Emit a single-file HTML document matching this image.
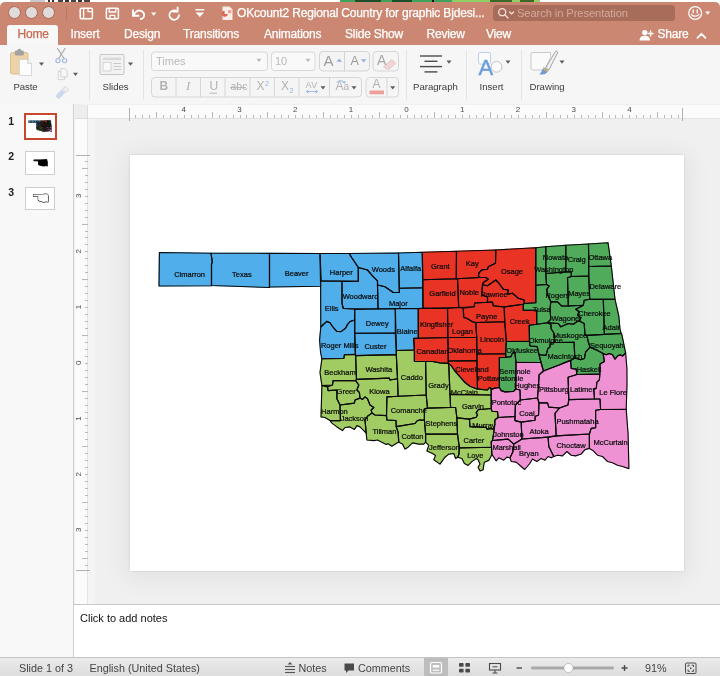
<!DOCTYPE html>
<html><head><meta charset="utf-8">
<style>
*{box-sizing:border-box;margin:0;padding:0}
html,body{width:720px;height:676px;overflow:hidden;background:#fff;font-family:"Liberation Sans",sans-serif;}
#root{position:relative;width:720px;height:676px;overflow:hidden;background:#fff}
.abs{position:absolute}
#bgstrip{left:0;top:0;width:720px;height:6px;background:#fff}
#win{will-change:transform;left:0;top:2px;width:720px;height:674px;background:#f6f6f6;border-radius:5px 5px 0 0;overflow:hidden}
#title{left:0;top:0;width:720px;height:43px;background:#cb8771}
.tl{position:absolute;top:4px;width:13px;height:13px;border-radius:50%;background:#dfdbda;border:1px solid #ad6853}
.tab{position:absolute;top:25px;color:#fff;font-size:12px;line-height:14px;white-space:nowrap;letter-spacing:-0.2px;-webkit-text-stroke:0.25px currentColor}
#hometab{left:7px;top:22.5px;width:51px;height:20.5px;background:#f8f8f8;border-radius:3px 3px 0 0}
#ribbon{left:0;top:43px;width:720px;height:60px;background:#f6f6f6;border-bottom:1px solid #d2d2d2}
.rl{position:absolute;font-size:9.6px;color:#3c3c3c;white-space:nowrap}
.fb{top:34px;font-size:12px;color:#b2b2b2;line-height:14px;white-space:nowrap}
.tn{position:absolute;left:8.3px;font-size:10.5px;font-weight:bold;color:#222;line-height:12px}
.vsep{position:absolute;width:1px;background:#e4e4e4}
#left{left:0;top:102px;width:74px;height:554px;background:#f8f8f8;border-right:1px solid #d0d0d0}
#work{left:74px;top:102px;width:646px;height:500px;background:#f0f0f0}
#band{left:88px;top:117px;width:7px;height:485px;background:#f5f5f5}
#hruler{left:88px;top:103px;width:632px;height:14px;background:#fbfbfb;border-bottom:1px solid #e2e2e2}
#vruler{left:75px;top:117px;width:13px;height:485px;background:#fbfbfb;border-right:1px solid #e4e4e4}
#corner{left:75px;top:103px;width:13px;height:14px;background:#ededed;border-right:1px solid #dcdcdc;border-bottom:1px solid #dcdcdc}
#slide{left:130px;top:153px;width:554px;height:416px;background:#fff;box-shadow:0 3px 24px 4px rgba(0,0,0,.065), 0 0 2px rgba(0,0,0,.14)}
#notes{left:74px;top:602px;width:646px;height:54px;background:#fff;border-top:1px solid #c8c8c8}
#status{left:0;top:655px;width:720px;height:19px;background:linear-gradient(#ebebeb,#dddddd);border-top:1px solid #c4c4c4}
.st{position:absolute;top:3.5px;font-size:10.8px;color:#444;white-space:nowrap}
</style></head><body>
<div id="root">
<div id="bgstrip" class="abs">
  <div class="abs" style="left:30px;top:0;width:15px;height:3px;background:#c9c9c9"></div>
  <div class="abs" style="left:48px;top:0;width:2px;height:3px;background:#333"></div><div class="abs" style="left:52px;top:0;width:2px;height:3px;background:#333"></div><div class="abs" style="left:58px;top:0;width:5px;height:2px;background:#444"></div><div class="abs" style="left:65px;top:0;width:4px;height:3px;background:#333"></div><div class="abs" style="left:71px;top:0;width:5px;height:2px;background:#444"></div><div class="abs" style="left:78px;top:0;width:4px;height:3px;background:#333"></div><div class="abs" style="left:84px;top:0;width:6px;height:2px;background:#444"></div>
  <div class="abs" style="left:340px;top:0;width:112px;height:4px;background:#3fa25a"></div>
  <div class="abs" style="left:452px;top:0;width:88px;height:4px;background:#8fcf63"></div>
  <div class="abs" style="left:355px;top:0;width:26px;height:2px;background:#1d4d2a"></div>
  <div class="abs" style="left:392px;top:0;width:20px;height:2px;background:#1d4d2a"></div>
  <div class="abs" style="left:432px;top:0;width:2px;height:3px;background:#111"></div>
  <div class="abs" style="left:490px;top:0;width:22px;height:2px;background:#3c6a26"></div>
  <div class="abs" style="left:520px;top:0;width:14px;height:2px;background:#3c6a26"></div>
</div>
<div id="win" class="abs">
  <div id="title" class="abs">
    <div class="tl" style="left:8.2px"></div><div class="tl" style="left:24.8px"></div><div class="tl" style="left:41.8px"></div>
    <div class="abs" style="left:66px;top:4px;width:1px;height:15px;background:#b87a68"></div>
    <svg class="abs" style="left:0;top:0" width="720" height="43" viewBox="0 0 720 43" fill="none" stroke="#fff" stroke-width="1.4" stroke-linecap="round" stroke-linejoin="round">
      <!-- sidebar/doc icon -->
      <rect x="80.2" y="6.2" width="12.2" height="10.6" rx="1.2" stroke-width="1.5"/><line x1="83.6" y1="6.4" x2="83.6" y2="16.6" stroke-width="1.3"/><path d="M88 6.5v3.2h4" stroke-width="1.2"/>
      <!-- save icon -->
      <path d="M107.6 6.2h9.6a1.2 1.2 0 0 1 1.2 1.2v8.2a1.2 1.2 0 0 1-1.2 1.2h-9.6a1.2 1.2 0 0 1-1.2-1.2v-8.2a1.2 1.2 0 0 1 1.2-1.2z" stroke-width="1.5"/><path d="M109.2 6.6v3.4h6.6v-3.4" stroke-width="1.3"/><path d="M110 16.6v-3.2h4.8v3.2" stroke-width="1.3"/>
      <!-- undo -->
      <path d="M133 8.2v5.6h5.6" stroke-width="1.9" stroke-linejoin="miter"/><path d="M133.6 13.2c1.6-3.6 4.6-5.4 7.4-4.4 2.8 1 3.8 3.8 2.8 6-0.6 1.2-1.6 2-3 2.2" stroke-width="1.9"/>
      <path d="M151 10.6h5.4l-2.7 3.2z" fill="#fff" stroke="none"/>
      <!-- redo -->
      <path d="M177.6 5.4v4.2h-4.4" stroke-width="1.8" stroke-linejoin="miter"/><path d="M177.2 9.4c-2.6-1.6-5.6-1-7 1.2-1.4 2.2-0.8 5 1.4 6.4 2.2 1.4 5.2 0.8 6.6-1.4 0.5-0.8 0.8-1.6 0.8-2.5" stroke-width="1.8"/>
      <!-- customize -->
      <line x1="196" y1="7.8" x2="203.6" y2="7.8" stroke-width="1.6"/><path d="M195.6 10.6h8.4l-4.2 4.4z" fill="#fff" stroke="none"/>
      <!-- doc icon for title -->
      <path d="M222.5 4.5h7l3 3v10.5h-10z" fill="#fbeeea" stroke="none"/><path d="M224.6 8.8a3 3 0 1 0 3.2 3.2h-3.2z" fill="#d9694c" stroke="none"/><rect x="228" y="8" width="3.4" height="3.2" fill="#e9a896" stroke="none"/>
      <!-- smiley -->
      <circle cx="695.2" cy="11" r="6.4" stroke-width="1.3"/><line x1="693.2" y1="8" x2="693.2" y2="10.8" stroke-width="1.3"/><line x1="697.2" y1="8" x2="697.2" y2="10.8" stroke-width="1.3"/><path d="M691.6 12.4c1 2.4 6 2.4 7.2 0" stroke-width="1.2"/>
      <path d="M705.2 9.5h5l-2.5 3.2z" fill="#fff" stroke="none"/>
      <!-- share person -->
      <circle cx="644.8" cy="30.6" r="2.7" fill="#fff" stroke="none"/><path d="M639.6 38.6c0-3.6 2.2-4.8 5.2-4.8s5.2 1.2 5.2 4.8z" fill="#fff" stroke="none"/><path d="M650.6 29v5M648.2 31.5h4.8" stroke-width="1.4"/>
      <!-- chevron up -->
      <path d="M697.4 35.8l4-4 4 4" stroke-width="1.8"/>
    </svg>
    <div class="abs" style="left:237px;top:4px;color:#fff;font-size:12px;line-height:15px;white-space:nowrap;letter-spacing:-0.17px;-webkit-text-stroke:0.25px #fff">OKcount2 Regional Country for graphic Bjdesi...</div>
    <div class="abs" style="left:493px;top:3px;width:182px;height:16px;border-radius:3.5px;background:#a86c5a"></div>
    <svg class="abs" style="left:497px;top:5px" width="20" height="13" viewBox="0 0 20 13" fill="none" stroke="#f4e4de" stroke-width="1.3" stroke-linecap="round"><circle cx="5.2" cy="5.2" r="3.5"/><line x1="7.9" y1="7.9" x2="11" y2="11"/><path d="M12.6 5l2 2 2-2" stroke-width="1.2"/></svg>
    <div class="abs" style="left:517px;top:4.5px;color:#d3aa9d;font-size:11.2px;line-height:13px;white-space:nowrap;letter-spacing:-0.1px">Search in Presentation</div>
    <div id="hometab" class="abs"></div>
    <div class="tab" style="left:17.5px;color:#c96a50">Home</div>
    <div class="tab" style="left:70.5px">Insert</div>
    <div class="tab" style="left:124px">Design</div>
    <div class="tab" style="left:183px">Transitions</div>
    <div class="tab" style="left:264px">Animations</div>
    <div class="tab" style="left:345px">Slide Show</div>
    <div class="tab" style="left:426.5px">Review</div>
    <div class="tab" style="left:486px">View</div>
    <div class="tab" style="left:657.5px">Share</div>
  </div>
  <div id="ribbon" class="abs">
    <svg class="abs" style="left:0;top:0" width="720" height="59" viewBox="0 43 720 59" fill="none">
      <!-- Paste clipboard : coordinates are in window coords minus 2 (page y-2) -->
      <rect x="10.5" y="50.500" width="17.500" height="21.500" rx="2" fill="#ecd2a8" stroke="#dcbd8a" stroke-width="1"/>
      <rect x="14.800" y="48.600" width="9" height="5" rx="1.400" fill="#a2a2a2"/>
      <circle cx="19.300" cy="48.800" r="2" fill="#a2a2a2"/>
      <path d="M19.500 57.500h8l4 4v12h-12z" fill="#fdfdfd" stroke="#cfcfcf" stroke-width="0.800"/>
      <path d="M27.500 57.500v4h4" fill="#ececec" stroke="#cfcfcf" stroke-width="0.700"/>
      <path d="M39 60.6h5l-2.5 3.2z" fill="#5d5d5d"/>
      <!-- scissors -->
      <g stroke="#a9a9a9" stroke-width="1.2" stroke-linecap="round"><line x1="57.6" y1="46.5" x2="63.6" y2="56"/><line x1="65" y1="46.5" x2="59" y2="56"/></g>
      <circle cx="58" cy="58.6" r="2.1" stroke="#9db9e2" stroke-width="1.1"/><circle cx="64.6" cy="58.6" r="2.1" stroke="#9db9e2" stroke-width="1.1"/>
      <!-- copy -->
      <path d="M58.2 69.2h4.2l2.2 2.2v6.2h-6.4z" fill="#f7f7f7" stroke="#cfcfcf" stroke-width="0.9"/>
      <path d="M60.8 66.6h4.2l2.2 2.2v6.2h-6.4z" fill="#f7f7f7" stroke="#cfcfcf" stroke-width="0.9"/>
      <path d="M73 70.8h5l-2.5 3.2z" fill="#5d5d5d"/>
      <!-- format painter -->
      <path d="M56.2 93.6l5.4-5.6 3 3-5.6 5.4c-1.2 0.2-2.6-1-2.8-2.8z" fill="#c9d9f0" stroke="#bccbe2" stroke-width="0.6"/>
      <path d="M62.4 87.2l3-3 3.4 3.4-3 3z" fill="#ececec" stroke="#d2d2d2" stroke-width="0.8"/>
      <!-- Slides icon -->
      <rect x="100" y="52.5" width="24" height="20" rx="1" fill="#f2f2f2" stroke="#c6c6c6" stroke-width="1"/>
      <rect x="103" y="55.5" width="18" height="2.6" fill="#d9d9d9"/>
      <rect x="103" y="60.5" width="8" height="8.5" fill="#f9f9f9" stroke="#cdcdcd" stroke-width="0.8"/>
      <g stroke="#c9c9c9" stroke-width="1"><line x1="113.5" y1="61.5" x2="121" y2="61.5"/><line x1="113.5" y1="64.5" x2="121" y2="64.5"/><line x1="113.5" y1="67.5" x2="121" y2="67.5"/></g>
      <path d="M128 60.6h5l-2.5 3.2z" fill="#5d5d5d"/>
      <!-- font box -->
      <rect x="151.5" y="50" width="116" height="18.5" rx="3" fill="#f9f9f9" stroke="#d7d7d7"/>
      <path d="M256.5 56.8h5l-2.5 3.2z" fill="#b8b8b8"/>
      <rect x="271.5" y="50" width="43.5" height="18.5" rx="3" fill="#f9f9f9" stroke="#d7d7d7"/>
      <path d="M305.5 56.8h5l-2.5 3.2z" fill="#b8b8b8"/>
      <!-- A^ Av group -->
      <rect x="319.5" y="49.5" width="50" height="19.5" rx="3.5" fill="#f4f4f4" stroke="#d4d4d4"/>
      <line x1="344.5" y1="50" x2="344.5" y2="69" stroke="#d3d3d3"/>
      <path d="M336.5 59.8h5.4l-2.7-3.4z" fill="#8fb2e0"/>
      <path d="M361 57.2h5.4l-2.7 3.4z" fill="#8fb2e0"/>
      <!-- eraser button -->
      <rect x="373" y="49.5" width="25.5" height="19.5" rx="3.5" fill="#f5f5f5" stroke="#d6d6d6"/>
      <path d="M383.5 64.8l8.2-7.2 4 3.6-6.4 5.8c-2 0.6-4.4-0.2-5.8-2.2z" fill="#f3d4d6" stroke="#ddb9bd" stroke-width="0.7"/>
      <!-- second row group -->
      <rect x="151.5" y="75.5" width="210" height="19.5" rx="3.5" fill="#f5f5f5" stroke="#d6d6d6"/>
      <g stroke="#d6d6d6"><line x1="176" y1="76" x2="176" y2="95"/><line x1="200.5" y1="76" x2="200.5" y2="95"/><line x1="225" y1="76" x2="225" y2="95"/><line x1="250" y1="76" x2="250" y2="95"/><line x1="274.5" y1="76" x2="274.5" y2="95"/><line x1="299" y1="76" x2="299" y2="95"/><line x1="329.5" y1="76" x2="329.5" y2="95"/></g>
      <line x1="183.5" y1="92" x2="192" y2="92" stroke="none"/>
      <line x1="209.5" y1="91.2" x2="217" y2="91.2" stroke="#b5b5b5" stroke-width="1"/>
      <line x1="230" y1="85.6" x2="246" y2="85.6" stroke="#b0b0b0" stroke-width="0.9"/>
      <path d="M306.5 89.6h11M306.5 89.6l2-1.6M306.5 89.6l2 1.6M317.500 89.6l-2-1.6M317.5 89.6l-2 1.6" stroke="#8fb2e0" stroke-width="0.9"/>
      <path d="M320.5 84.2h5l-2.500 3.200z" fill="#5d5d5d"/>
      <path d="M336.5 80.500c2.500-2.400 6-2.400 7.800 0.400" stroke="#8fb2e0" stroke-width="1"/><path d="M345.800 78.800l-1 2.800-2.600-1.200z" fill="#8fb2e0"/>
      <path d="M351.5 84.200h5l-2.500 3.200z" fill="#5d5d5d"/>
      <!-- font colour -->
      <rect x="366" y="75.500" width="32.500" height="19.500" rx="3.500" fill="#f5f5f5" stroke="#d6d6d6"/>
      <line x1="387" y1="76" x2="387" y2="95" stroke="#d6d6d6"/>
      <rect x="369.500" y="88.500" width="14.500" height="3.800" fill="#ef9f9a"/>
      <path d="M390.200 84.200h5l-2.500 3.200z" fill="#5d5d5d"/>
      <!-- paragraph -->
      <g stroke="#4c4c4c" stroke-width="1.400"><line x1="420" y1="54" x2="442" y2="54"/><line x1="424.500" y1="59.300" x2="437.500" y2="59.300"/><line x1="420" y1="64.600" x2="442" y2="64.600"/><line x1="424.500" y1="69.900" x2="437.500" y2="69.900"/></g>
      <path d="M446.500 58.600h5l-2.500 3.200z" fill="#5d5d5d"/>
      <!-- insert -->
      <rect x="478.500" y="50.500" width="12" height="11.500" rx="1.500" fill="#fbfbfb" stroke="#bcd0ec" stroke-width="1"/>
      <circle cx="496.500" cy="64.800" r="5.400" fill="#fbfbfb" stroke="#c2c2c2" stroke-width="1"/>
      <path d="M505.500 58.600h5l-2.500 3.200z" fill="#5d5d5d"/>
      <text x="478.6" y="73.2" font-family="Liberation Sans, sans-serif" font-size="22" fill="#6a9ce0" stroke="#6a9ce0" stroke-width="0.4">A</text>
      <!-- drawing -->
      <path d="M533 50.500h17.500v5l-6 12.500h-11.500a2 2 0 0 1-2-2v-13.500a2 2 0 0 1 2-2z" fill="#fafafa" stroke="#c9c9c9" stroke-width="1"/>
      <path d="M545.500 66.200l9.800-16.600c1-1 2.800 0 2.200 1.400l-8.600 17z" fill="#f0f0f0" stroke="#9b9b9b" stroke-width="0.900"/>
      <path d="M543.600 65.200l4.800 2.800c-0.600 3.200-4.200 5.400-9 4.200 2.400-1.600 2.400-4.600 4.200-7z" fill="#6f9ad8"/>
      <path d="M543.200 66.400l5 3" stroke="#e3b552" stroke-width="1.600"/>
      <path d="M559.500 58.600h5l-2.500 3.200z" fill="#5d5d5d"/>
    </svg>
    <div class="vsep" style="left:89px;top:5px;height:50px"></div>
    <div class="vsep" style="left:143px;top:5px;height:50px"></div>
    <div class="vsep" style="left:406px;top:5px;height:50px"></div>
    <div class="vsep" style="left:466px;top:5px;height:50px"></div>
    <div class="vsep" style="left:521px;top:5px;height:50px"></div>
    <div class="rl" style="left:13.500px;top:35.500px;letter-spacing:-0.1px">Paste</div>
    <div class="rl" style="left:102.500px;top:35.500px">Slides</div>
    <div class="rl" style="left:413px;top:35.500px">Paragraph</div>
    <div class="rl" style="left:479.500px;top:35.500px">Insert</div>
    <div class="rl" style="left:529.500px;top:35.500px">Drawing</div>
    <div class="abs" style="left:156px;top:10px;font-size:11px;color:#b9b9b9;line-height:13px">Times</div>
    <div class="abs" style="left:275px;top:10px;font-size:11px;color:#b9b9b9;line-height:13px">10</div>
    <div class="abs" style="left:323.500px;top:7px;font-size:15px;color:#9c9c9c;line-height:17px">A</div>
    <div class="abs" style="left:350.500px;top:9px;font-size:12.500px;color:#9c9c9c;line-height:15px">A</div>
    <div class="abs" style="left:377px;top:6.500px;font-size:14px;color:#a8a8a8;line-height:16px">A</div>
    <div class="abs fb" style="left:159.500px;font-weight:bold">B</div>
    <div class="abs fb" style="left:186px;font-style:italic;font-family:'Liberation Serif',serif;font-size:13px">I</div>
    <div class="abs fb" style="left:209.500px">U</div>
    <div class="abs fb" style="left:230.500px;font-size:10.500px">abc</div>
    <div class="abs fb" style="left:256.500px">X<span style="font-size:7px;color:#8fb2e0;position:relative;top:-4.500px;left:0.500px">2</span></div>
    <div class="abs fb" style="left:281px">X<span style="font-size:7px;color:#8fb2e0;position:relative;top:2.500px;left:0.500px">2</span></div>
    <div class="abs fb" style="left:305.500px;font-size:9px;top:33px;letter-spacing:0.300px">AV</div>
    <div class="abs fb" style="left:335.500px;font-size:12px">A<span style="font-size:10px">a</span></div>
    <div class="abs fb" style="left:372.500px;font-size:12px;top:31.500px">A</div>
  </div>
  <div id="work" class="abs"></div>
  <div id="band" class="abs"></div>
  <div id="hruler" class="abs"></div>
  <div id="vruler" class="abs"></div>
  <div id="corner" class="abs"></div>
<svg class="abs" style="left:88px;top:103px" width="632" height="18" viewBox="88 105 632 18">
<g stroke="#b9b9b9" stroke-width="1" shape-rendering="crispEdges">
<line x1="129.5" y1="108" x2="129.5" y2="120.5" stroke="#b0b0b0"/>
<line x1="682.5" y1="108" x2="682.5" y2="120.5" stroke="#b0b0b0"/>
<line x1="135.5" y1="114.5" x2="135.5" y2="117.5"/>
<line x1="142.5" y1="114.5" x2="142.5" y2="117.5"/>
<line x1="149.5" y1="114.5" x2="149.5" y2="117.5"/>
<line x1="156.5" y1="111.5" x2="156.5" y2="117.5"/>
<line x1="163.5" y1="114.5" x2="163.5" y2="117.5"/>
<line x1="170.5" y1="114.5" x2="170.5" y2="117.5"/>
<line x1="177.5" y1="114.5" x2="177.5" y2="117.5"/>
<line x1="184.5" y1="115.0" x2="184.5" y2="117.5"/>
<line x1="191.5" y1="114.5" x2="191.5" y2="117.5"/>
<line x1="198.5" y1="114.5" x2="198.5" y2="117.5"/>
<line x1="205.5" y1="114.5" x2="205.5" y2="117.5"/>
<line x1="212.5" y1="111.5" x2="212.5" y2="117.5"/>
<line x1="219.5" y1="114.5" x2="219.5" y2="117.5"/>
<line x1="226.5" y1="114.5" x2="226.5" y2="117.5"/>
<line x1="233.5" y1="114.5" x2="233.5" y2="117.5"/>
<line x1="240.5" y1="115.0" x2="240.5" y2="117.5"/>
<line x1="246.5" y1="114.5" x2="246.5" y2="117.5"/>
<line x1="253.5" y1="114.5" x2="253.5" y2="117.5"/>
<line x1="260.5" y1="114.5" x2="260.5" y2="117.5"/>
<line x1="267.5" y1="111.5" x2="267.5" y2="117.5"/>
<line x1="274.5" y1="114.5" x2="274.5" y2="117.5"/>
<line x1="281.5" y1="114.5" x2="281.5" y2="117.5"/>
<line x1="288.5" y1="114.5" x2="288.5" y2="117.5"/>
<line x1="295.5" y1="115.0" x2="295.5" y2="117.5"/>
<line x1="302.5" y1="114.5" x2="302.5" y2="117.5"/>
<line x1="309.5" y1="114.5" x2="309.5" y2="117.5"/>
<line x1="316.5" y1="114.5" x2="316.5" y2="117.5"/>
<line x1="323.5" y1="111.5" x2="323.5" y2="117.5"/>
<line x1="330.5" y1="114.5" x2="330.5" y2="117.5"/>
<line x1="337.5" y1="114.5" x2="337.5" y2="117.5"/>
<line x1="344.5" y1="114.5" x2="344.5" y2="117.5"/>
<line x1="351.5" y1="115.0" x2="351.5" y2="117.5"/>
<line x1="358.5" y1="114.5" x2="358.5" y2="117.5"/>
<line x1="365.5" y1="114.5" x2="365.5" y2="117.5"/>
<line x1="372.5" y1="114.5" x2="372.5" y2="117.5"/>
<line x1="379.5" y1="111.5" x2="379.5" y2="117.5"/>
<line x1="386.5" y1="114.5" x2="386.5" y2="117.5"/>
<line x1="393.5" y1="114.5" x2="393.5" y2="117.5"/>
<line x1="400.5" y1="114.5" x2="400.5" y2="117.5"/>
<line x1="407.5" y1="115.0" x2="407.5" y2="117.5"/>
<line x1="414.5" y1="114.5" x2="414.5" y2="117.5"/>
<line x1="421.5" y1="114.5" x2="421.5" y2="117.5"/>
<line x1="427.5" y1="114.5" x2="427.5" y2="117.5"/>
<line x1="434.5" y1="111.5" x2="434.5" y2="117.5"/>
<line x1="441.5" y1="114.5" x2="441.5" y2="117.5"/>
<line x1="448.5" y1="114.5" x2="448.5" y2="117.5"/>
<line x1="455.5" y1="114.5" x2="455.5" y2="117.5"/>
<line x1="462.5" y1="115.0" x2="462.5" y2="117.5"/>
<line x1="469.5" y1="114.5" x2="469.5" y2="117.5"/>
<line x1="476.5" y1="114.5" x2="476.5" y2="117.5"/>
<line x1="483.5" y1="114.5" x2="483.5" y2="117.5"/>
<line x1="490.5" y1="111.5" x2="490.5" y2="117.5"/>
<line x1="497.5" y1="114.5" x2="497.5" y2="117.5"/>
<line x1="504.5" y1="114.5" x2="504.5" y2="117.5"/>
<line x1="511.5" y1="114.5" x2="511.5" y2="117.5"/>
<line x1="518.5" y1="115.0" x2="518.5" y2="117.5"/>
<line x1="525.5" y1="114.5" x2="525.5" y2="117.5"/>
<line x1="532.5" y1="114.5" x2="532.5" y2="117.5"/>
<line x1="539.5" y1="114.5" x2="539.5" y2="117.5"/>
<line x1="546.5" y1="111.5" x2="546.5" y2="117.5"/>
<line x1="553.5" y1="114.5" x2="553.5" y2="117.5"/>
<line x1="560.5" y1="114.5" x2="560.5" y2="117.5"/>
<line x1="567.5" y1="114.5" x2="567.5" y2="117.5"/>
<line x1="574.5" y1="115.0" x2="574.5" y2="117.5"/>
<line x1="581.5" y1="114.5" x2="581.5" y2="117.5"/>
<line x1="588.5" y1="114.5" x2="588.5" y2="117.5"/>
<line x1="595.5" y1="114.5" x2="595.5" y2="117.5"/>
<line x1="602.5" y1="111.5" x2="602.5" y2="117.5"/>
<line x1="609.5" y1="114.5" x2="609.5" y2="117.5"/>
<line x1="615.5" y1="114.5" x2="615.5" y2="117.5"/>
<line x1="622.5" y1="114.5" x2="622.5" y2="117.5"/>
<line x1="629.5" y1="115.0" x2="629.5" y2="117.5"/>
<line x1="636.5" y1="114.5" x2="636.5" y2="117.5"/>
<line x1="643.5" y1="114.5" x2="643.5" y2="117.5"/>
<line x1="650.5" y1="114.5" x2="650.5" y2="117.5"/>
<line x1="657.5" y1="111.5" x2="657.5" y2="117.5"/>
<line x1="664.5" y1="114.5" x2="664.5" y2="117.5"/>
<line x1="671.5" y1="114.5" x2="671.5" y2="117.5"/>
<line x1="678.5" y1="114.5" x2="678.5" y2="117.5"/>
</g>
<g font-family="Liberation Sans, sans-serif" font-size="8" fill="#4a4a4a" text-anchor="middle">
<text x="183.8" y="112.3">4</text>
<text x="239.5" y="112.3">3</text>
<text x="295.2" y="112.3">2</text>
<text x="350.9" y="112.3">1</text>
<text x="406.6" y="112.3">0</text>
<text x="462.3" y="112.3">1</text>
<text x="518.0" y="112.3">2</text>
<text x="573.7" y="112.3">3</text>
<text x="629.4" y="112.3">4</text>
</g></svg>
<svg class="abs" style="left:74px;top:116px" width="16" height="486" viewBox="74 118 16 486">
<g stroke="#b9b9b9" stroke-width="1" shape-rendering="crispEdges">
<line x1="76" y1="155.5" x2="90" y2="155.5" stroke="#b0b0b0"/>
<line x1="76" y1="570.5" x2="90" y2="570.5" stroke="#b0b0b0"/>
<line x1="84.5" y1="161.5" x2="87.5" y2="161.5"/>
<line x1="81.5" y1="168.5" x2="87.5" y2="168.5"/>
<line x1="84.5" y1="175.5" x2="87.5" y2="175.5"/>
<line x1="84.5" y1="182.5" x2="87.5" y2="182.5"/>
<line x1="84.5" y1="189.5" x2="87.5" y2="189.5"/>
<line x1="85.0" y1="196.5" x2="87.5" y2="196.5"/>
<line x1="84.5" y1="203.5" x2="87.5" y2="203.5"/>
<line x1="84.5" y1="210.5" x2="87.5" y2="210.5"/>
<line x1="84.5" y1="217.5" x2="87.5" y2="217.5"/>
<line x1="81.5" y1="224.5" x2="87.5" y2="224.5"/>
<line x1="84.5" y1="231.5" x2="87.5" y2="231.5"/>
<line x1="84.5" y1="237.5" x2="87.5" y2="237.5"/>
<line x1="84.5" y1="244.5" x2="87.5" y2="244.5"/>
<line x1="85.0" y1="251.5" x2="87.5" y2="251.5"/>
<line x1="84.5" y1="258.5" x2="87.5" y2="258.5"/>
<line x1="84.5" y1="265.5" x2="87.5" y2="265.5"/>
<line x1="84.5" y1="272.5" x2="87.5" y2="272.5"/>
<line x1="81.5" y1="279.5" x2="87.5" y2="279.5"/>
<line x1="84.5" y1="286.5" x2="87.5" y2="286.5"/>
<line x1="84.5" y1="293.5" x2="87.5" y2="293.5"/>
<line x1="84.5" y1="300.5" x2="87.5" y2="300.5"/>
<line x1="85.0" y1="307.5" x2="87.5" y2="307.5"/>
<line x1="84.5" y1="314.5" x2="87.5" y2="314.5"/>
<line x1="84.5" y1="321.5" x2="87.5" y2="321.5"/>
<line x1="84.5" y1="328.5" x2="87.5" y2="328.5"/>
<line x1="81.5" y1="335.5" x2="87.5" y2="335.5"/>
<line x1="84.5" y1="342.5" x2="87.5" y2="342.5"/>
<line x1="84.5" y1="349.5" x2="87.5" y2="349.5"/>
<line x1="84.5" y1="356.5" x2="87.5" y2="356.5"/>
<line x1="85.0" y1="363.5" x2="87.5" y2="363.5"/>
<line x1="84.5" y1="370.5" x2="87.5" y2="370.5"/>
<line x1="84.5" y1="377.5" x2="87.5" y2="377.5"/>
<line x1="84.5" y1="384.5" x2="87.5" y2="384.5"/>
<line x1="81.5" y1="391.5" x2="87.5" y2="391.5"/>
<line x1="84.5" y1="398.5" x2="87.5" y2="398.5"/>
<line x1="84.5" y1="405.5" x2="87.5" y2="405.5"/>
<line x1="84.5" y1="412.5" x2="87.5" y2="412.5"/>
<line x1="85.0" y1="418.5" x2="87.5" y2="418.5"/>
<line x1="84.5" y1="425.5" x2="87.5" y2="425.5"/>
<line x1="84.5" y1="432.5" x2="87.5" y2="432.5"/>
<line x1="84.5" y1="439.5" x2="87.5" y2="439.5"/>
<line x1="81.5" y1="446.5" x2="87.5" y2="446.5"/>
<line x1="84.5" y1="453.5" x2="87.5" y2="453.5"/>
<line x1="84.5" y1="460.5" x2="87.5" y2="460.5"/>
<line x1="84.5" y1="467.5" x2="87.5" y2="467.5"/>
<line x1="85.0" y1="474.5" x2="87.5" y2="474.5"/>
<line x1="84.5" y1="481.5" x2="87.5" y2="481.5"/>
<line x1="84.5" y1="488.5" x2="87.5" y2="488.5"/>
<line x1="84.5" y1="495.5" x2="87.5" y2="495.5"/>
<line x1="81.5" y1="502.5" x2="87.5" y2="502.5"/>
<line x1="84.5" y1="509.5" x2="87.5" y2="509.5"/>
<line x1="84.5" y1="516.5" x2="87.5" y2="516.5"/>
<line x1="84.5" y1="523.5" x2="87.5" y2="523.5"/>
<line x1="85.0" y1="530.5" x2="87.5" y2="530.5"/>
<line x1="84.5" y1="537.5" x2="87.5" y2="537.5"/>
<line x1="84.5" y1="544.5" x2="87.5" y2="544.5"/>
<line x1="84.5" y1="551.5" x2="87.5" y2="551.5"/>
<line x1="81.5" y1="558.5" x2="87.5" y2="558.5"/>
<line x1="84.5" y1="565.5" x2="87.5" y2="565.5"/>
</g>
<g font-family="Liberation Sans, sans-serif" font-size="8" fill="#4a4a4a" text-anchor="middle">
<text transform="translate(81.4 195.7) rotate(-90)">3</text>
<text transform="translate(81.4 251.4) rotate(-90)">2</text>
<text transform="translate(81.4 307.1) rotate(-90)">1</text>
<text transform="translate(81.4 362.8) rotate(-90)">0</text>
<text transform="translate(81.4 418.5) rotate(-90)">1</text>
<text transform="translate(81.4 474.2) rotate(-90)">2</text>
<text transform="translate(81.4 529.9) rotate(-90)">3</text>
</g></svg>
  <div id="slide" class="abs"></div>
  <svg id="mapsvg" class="abs" style="left:0;top:-2px" width="720" height="676" viewBox="0 0 720 676">
<g id="mapfill">
<polygon points="159.4,252.5 211.0,253.2 212.3,262.0 211.5,264.0 211.5,285.8 159.0,286.0" fill="#50aeeb" stroke="#50aeeb" stroke-width="1"/>
<polygon points="211.0,253.2 269.5,253.3 269.5,287.5 211.5,285.5 211.5,264.0 212.3,262.0" fill="#50aeeb" stroke="#50aeeb" stroke-width="1"/>
<polygon points="269.5,253.3 320.0,253.5 320.6,286.3 269.5,287.0" fill="#50aeeb" stroke="#50aeeb" stroke-width="1"/>
<polygon points="320.0,253.5 349.2,253.5 352.0,258.0 355.0,262.5 358.3,267.5 358.3,281.3 321.2,280.8" fill="#50aeeb" stroke="#50aeeb" stroke-width="1"/>
<polygon points="320.6,281.0 342.0,281.3 342.0,303.3 343.3,308.5 354.7,309.3 354.7,320.0 350.0,321.5 347.5,324.5 345.5,328.3 341.0,331.6 336.5,331.2 332.5,326.5 330.0,322.8 326.7,321.4 320.8,327.0" fill="#50aeeb" stroke="#50aeeb" stroke-width="1"/>
<polygon points="349.2,253.5 398.5,253.0 399.3,292.5 393.3,292.5 385.0,286.7 377.5,285.0 377.5,280.8 372.5,275.8 367.5,270.0 358.3,267.5 355.0,262.5 352.0,258.0" fill="#50aeeb" stroke="#50aeeb" stroke-width="1"/>
<polygon points="398.5,253.0 422.3,252.3 422.8,287.7 399.3,288.3" fill="#50aeeb" stroke="#50aeeb" stroke-width="1"/>
<polygon points="342.0,281.3 358.3,281.3 358.3,267.5 367.5,270.0 372.5,275.8 377.5,280.8 377.5,285.0 378.0,308.7 343.3,308.5 342.0,303.3" fill="#50aeeb" stroke="#50aeeb" stroke-width="1"/>
<polygon points="377.5,285.0 385.0,286.7 393.3,292.5 399.3,292.5 399.3,288.3 422.8,287.7 423.0,308.3 378.0,308.7" fill="#50aeeb" stroke="#50aeeb" stroke-width="1"/>
<polygon points="354.7,309.5 395.3,308.7 395.3,333.0 354.7,333.3" fill="#50aeeb" stroke="#50aeeb" stroke-width="1"/>
<polygon points="395.3,308.7 418.3,308.5 418.3,338.3 413.7,338.3 414.4,350.0 396.5,350.5" fill="#50aeeb" stroke="#50aeeb" stroke-width="1"/>
<polygon points="354.7,333.3 395.3,333.0 396.3,354.6 355.6,355.6" fill="#50aeeb" stroke="#50aeeb" stroke-width="1"/>
<polygon points="320.8,327.0 326.7,321.4 330.0,322.8 332.5,326.5 336.5,331.2 341.0,331.6 345.5,328.3 347.5,324.5 350.0,321.5 354.7,320.0 354.7,333.3 355.2,354.4 344.4,354.8 343.8,358.5 321.9,358.8 320.6,352.5 319.6,340.0" fill="#50aeeb" stroke="#50aeeb" stroke-width="1"/>
<polygon points="422.3,252.3 456.5,251.3 456.3,278.7 422.8,279.7" fill="#e83325" stroke="#e83325" stroke-width="1"/>
<polygon points="456.5,251.3 495.8,250.0 495.5,263.3 488.3,266.7 487.5,269.2 481.7,270.0 479.2,272.5 478.3,275.8 480.0,277.5 456.3,278.7" fill="#e83325" stroke="#e83325" stroke-width="1"/>
<polygon points="495.8,250.0 535.8,247.7 535.8,302.7 524.2,303.5 524.2,300.0 518.3,298.3 512.5,293.3 507.5,294.2 508.3,290.0 503.3,289.2 498.3,282.5 495.8,280.0 487.5,285.8 482.5,284.7 483.3,282.5 488.3,279.2 485.8,277.5 480.0,277.5 478.3,275.8 479.2,272.5 481.7,270.0 487.5,269.2 488.3,266.7 495.5,263.3" fill="#e83325" stroke="#e83325" stroke-width="1"/>
<polygon points="422.8,279.7 456.3,278.7 457.5,279.0 458.7,307.5 423.0,308.3" fill="#e83325" stroke="#e83325" stroke-width="1"/>
<polygon points="456.3,278.7 480.0,277.5 485.8,277.5 488.3,279.2 483.3,282.5 482.5,284.7 481.7,295.0 487.5,297.0 487.5,302.2 474.7,303.0 474.2,306.7 458.7,307.5 457.5,279.0" fill="#e83325" stroke="#e83325" stroke-width="1"/>
<polygon points="482.5,284.7 487.5,285.8 495.8,280.0 498.3,282.5 503.3,289.2 508.3,290.0 507.5,294.2 512.5,293.3 518.3,298.3 524.2,300.0 524.2,303.5 523.3,304.2 504.2,307.0 493.3,305.8 492.5,302.0 487.5,302.2 487.5,297.0 481.7,295.0" fill="#e83325" stroke="#e83325" stroke-width="1"/>
<polygon points="463.3,308.2 474.2,306.7 474.7,303.0 492.5,302.0 493.3,305.8 504.2,307.0 504.7,321.7 475.8,322.5 472.5,321.7 466.7,318.3 463.7,317.5" fill="#e83325" stroke="#e83325" stroke-width="1"/>
<polygon points="504.2,307.0 523.3,304.2 523.3,310.2 536.7,310.2 536.7,324.3 529.2,325.2 529.5,341.3 506.3,341.5 504.7,321.7" fill="#e83325" stroke="#e83325" stroke-width="1"/>
<polygon points="418.3,308.5 423.0,308.3 447.5,308.5 447.9,337.5 418.3,338.3" fill="#e83325" stroke="#e83325" stroke-width="1"/>
<polygon points="447.5,308.5 458.7,307.5 463.3,308.2 463.7,317.5 466.7,318.3 472.5,321.7 475.8,322.5 476.7,337.5 447.9,337.5" fill="#e83325" stroke="#e83325" stroke-width="1"/>
<polygon points="475.8,322.5 504.7,321.7 506.3,341.5 505.6,353.8 476.9,354.0 476.7,337.5" fill="#e83325" stroke="#e83325" stroke-width="1"/>
<polygon points="413.7,338.3 418.3,338.3 447.9,337.5 448.3,363.4 440.0,362.9 432.5,361.5 425.6,361.5 414.4,361.2 414.4,350.0" fill="#e83325" stroke="#e83325" stroke-width="1"/>
<polygon points="447.9,337.5 476.7,337.5 476.9,360.6 448.3,361.0" fill="#e83325" stroke="#e83325" stroke-width="1"/>
<polygon points="448.3,361.0 476.9,360.6 477.5,388.8 476.2,388.8 470.0,386.2 465.0,382.5 460.0,376.9 455.0,371.2 451.2,365.6 448.3,363.4" fill="#e83325" stroke="#e83325" stroke-width="1"/>
<polygon points="476.9,354.0 505.6,353.8 506.0,357.3 499.4,357.5 499.4,387.5 495.0,388.1 491.2,389.4 490.6,388.1 489.4,387.5 487.5,390.0 481.2,389.4 477.5,388.8 476.9,360.6" fill="#e83325" stroke="#e83325" stroke-width="1"/>
<polygon points="535.8,247.7 545.8,246.7 545.8,273.5 546.5,284.5 535.8,285.2" fill="#50ab5b" stroke="#50ab5b" stroke-width="1"/>
<polygon points="545.8,246.7 565.8,245.2 565.8,272.0 545.8,273.5" fill="#50ab5b" stroke="#50ab5b" stroke-width="1"/>
<polygon points="565.8,245.2 588.5,244.0 588.7,266.5 588.7,276.0 571.3,276.5 571.3,271.8 565.8,272.0" fill="#50ab5b" stroke="#50ab5b" stroke-width="1"/>
<polygon points="588.5,244.0 608.0,242.7 611.3,266.0 588.7,266.5" fill="#50ab5b" stroke="#50ab5b" stroke-width="1"/>
<polygon points="588.7,266.5 611.3,266.0 615.0,299.3 603.3,299.3 589.7,299.3 588.7,276.0" fill="#50ab5b" stroke="#50ab5b" stroke-width="1"/>
<polygon points="567.5,277.7 571.3,276.5 588.7,276.0 589.7,299.3 584.2,300.2 583.3,305.2 568.3,306.0" fill="#50ab5b" stroke="#50ab5b" stroke-width="1"/>
<polygon points="545.8,273.5 565.8,272.0 571.3,271.8 571.3,276.5 567.5,277.7 568.3,306.0 561.7,306.0 557.5,301.8 550.8,301.8 547.5,294.3 546.7,289.3 549.2,286.0 546.5,284.5" fill="#50ab5b" stroke="#50ab5b" stroke-width="1"/>
<polygon points="535.8,285.2 546.5,284.5 549.2,286.0 546.7,289.3 547.5,294.3 550.8,301.8 550.0,309.3 550.8,319.3 547.5,322.7 536.7,324.3 536.7,310.2 523.3,310.2 523.3,304.2 524.2,303.5 535.8,302.7" fill="#50ab5b" stroke="#50ab5b" stroke-width="1"/>
<polygon points="550.8,301.8 557.5,301.8 561.7,306.0 568.3,306.0 583.3,305.2 575.8,309.3 579.2,311.8 577.5,315.2 580.8,317.7 579.2,321.0 576.7,321.8 573.3,324.3 568.3,323.5 560.8,326.8 558.3,323.5 547.5,322.7 550.8,319.3 550.0,309.3" fill="#50ab5b" stroke="#50ab5b" stroke-width="1"/>
<polygon points="583.3,305.2 584.2,300.2 589.7,299.3 603.3,299.3 604.4,334.4 586.9,335.4 585.0,335.2 584.2,323.5 579.2,321.0 580.8,317.7 577.5,315.2 579.2,311.8 575.8,309.3" fill="#50ab5b" stroke="#50ab5b" stroke-width="1"/>
<polygon points="603.3,299.3 615.0,299.3 618.8,316.0 620.0,329.3 621.2,333.5 604.4,334.4" fill="#50ab5b" stroke="#50ab5b" stroke-width="1"/>
<polygon points="586.9,335.4 604.4,334.4 621.2,333.5 621.9,334.8 625.6,352.9 622.5,356.0 620.0,354.8 617.5,356.0 615.0,359.1 612.5,354.8 609.4,353.5 606.2,354.8 603.1,353.5 597.5,350.4 590.0,347.2 588.1,341.0" fill="#50ab5b" stroke="#50ab5b" stroke-width="1"/>
<polygon points="547.5,322.7 558.3,323.5 560.8,326.8 568.3,323.5 573.3,324.3 576.7,321.8 579.2,321.0 584.2,323.5 585.0,335.2 586.9,335.4 588.1,341.0 590.0,347.2 585.6,352.2 584.4,358.5 580.6,359.8 574.8,358.0 574.1,342.2 554.8,342.5 554.1,333.5 551.0,328.5 551.0,324.5" fill="#50ab5b" stroke="#50ab5b" stroke-width="1"/>
<polygon points="529.2,325.2 536.7,324.3 547.5,322.7 551.0,324.5 551.0,328.5 554.1,333.5 554.8,342.5 550.4,342.9 549.8,347.2 547.9,348.5 546.0,355.4 539.1,354.8 537.2,346.6 530.4,346.0 529.8,345.4 529.5,341.3" fill="#50ab5b" stroke="#50ab5b" stroke-width="1"/>
<polygon points="506.3,341.5 529.5,341.3 529.8,345.4 530.4,346.0 537.2,346.6 539.1,354.8 541.0,362.5 516.0,362.2 514.8,352.2 512.2,353.5 511.0,356.6 506.0,357.3 505.6,353.8" fill="#50ab5b" stroke="#50ab5b" stroke-width="1"/>
<polygon points="499.4,357.5 506.0,357.3 511.0,356.6 512.2,353.5 514.8,352.2 516.0,362.2 515.8,389.0 513.5,391.4 505.0,391.9 501.2,390.6 499.4,387.5" fill="#50ab5b" stroke="#50ab5b" stroke-width="1"/>
<polygon points="550.4,342.9 554.8,342.5 574.1,342.2 574.8,358.0 570.6,360.4 564.1,362.9 559.8,364.8 549.8,368.5 543.5,371.0 541.0,362.5 539.1,354.8 546.0,355.4 547.9,348.5 549.8,347.2" fill="#50ab5b" stroke="#50ab5b" stroke-width="1"/>
<polygon points="590.0,347.2 597.5,350.4 603.1,353.5 604.4,361.6 600.0,364.1 599.8,374.1 576.9,374.5 576.2,369.1 571.2,368.5 570.6,360.4 574.8,358.0 580.6,359.8 584.4,358.5 585.6,352.2" fill="#50ab5b" stroke="#50ab5b" stroke-width="1"/>
<polygon points="516.0,362.2 541.0,362.5 543.5,371.0 539.1,374.8 538.5,386.0 537.5,398.0 520.3,400.0 520.0,390.0 515.8,389.0" fill="#ee92d4" stroke="#ee92d4" stroke-width="1"/>
<polygon points="491.2,389.4 495.0,388.1 499.4,387.5 501.2,390.6 505.0,391.9 513.5,391.4 515.8,389.0 520.0,390.0 520.3,400.0 515.4,405.0 515.0,416.5 498.1,417.5 497.5,411.6 491.9,411.2 491.2,408.5" fill="#ee92d4" stroke="#ee92d4" stroke-width="1"/>
<polygon points="515.4,405.0 520.3,400.0 537.5,398.0 539.0,402.8 538.5,415.2 535.2,416.2 535.0,420.2 521.2,422.1 515.0,420.6 515.0,416.5" fill="#ee92d4" stroke="#ee92d4" stroke-width="1"/>
<polygon points="543.5,371.0 549.8,368.5 559.8,364.8 564.1,362.9 570.6,360.4 571.2,368.5 576.2,369.1 576.9,374.5 568.1,377.2 568.8,399.6 568.0,405.0 559.5,408.0 548.8,407.1 547.5,402.8 539.0,402.8 537.5,398.0 538.5,386.0 539.1,374.8" fill="#ee92d4" stroke="#ee92d4" stroke-width="1"/>
<polygon points="568.1,377.2 576.9,374.5 599.8,374.1 599.4,379.8 596.9,382.2 596.2,388.5 593.8,389.1 594.5,399.0 568.8,399.6" fill="#ee92d4" stroke="#ee92d4" stroke-width="1"/>
<polygon points="599.8,374.1 600.0,364.1 604.4,361.6 603.1,353.5 606.2,354.8 609.4,353.5 612.5,354.8 615.0,359.1 617.5,356.0 620.0,354.8 622.5,356.0 625.6,352.9 626.9,368.5 627.0,384.0 626.2,409.4 600.6,409.5 600.0,399.0 594.5,399.0 593.8,389.1 596.2,388.5 596.9,382.2 599.4,379.8" fill="#ee92d4" stroke="#ee92d4" stroke-width="1"/>
<polygon points="568.8,399.6 594.5,399.0 600.0,399.0 600.6,409.5 595.6,410.2 595.6,427.8 591.2,428.4 589.4,434.0 556.2,435.9 555.0,413.4 559.5,408.0 568.0,405.0" fill="#ee92d4" stroke="#ee92d4" stroke-width="1"/>
<polygon points="595.6,410.2 600.6,409.5 626.2,409.4 628.1,434.0 628.9,468.6 622.5,466.5 617.5,465.2 612.5,462.8 607.5,461.5 602.5,456.5 597.5,455.2 592.5,450.2 589.4,448.4 589.4,434.0 591.2,428.4 595.6,427.8" fill="#ee92d4" stroke="#ee92d4" stroke-width="1"/>
<polygon points="548.1,437.1 556.2,435.9 589.4,434.0 589.4,448.4 585.0,449.6 581.2,454.0 575.6,455.9 571.2,455.2 566.9,451.5 562.5,455.9 557.5,455.2 553.8,456.5 548.8,446.5" fill="#ee92d4" stroke="#ee92d4" stroke-width="1"/>
<polygon points="539.0,402.8 547.5,402.8 548.8,407.1 559.5,408.0 555.0,413.4 556.2,435.9 548.1,437.1 521.9,439.0 521.2,422.1 535.0,420.2 535.2,416.2 538.5,415.2" fill="#ee92d4" stroke="#ee92d4" stroke-width="1"/>
<polygon points="498.1,417.5 515.0,416.5 515.0,420.6 521.2,422.1 521.9,439.0 518.1,441.5 513.8,444.1 508.1,439.1 492.5,440.5 494.4,428.5 495.0,419.8" fill="#ee92d4" stroke="#ee92d4" stroke-width="1"/>
<polygon points="492.5,440.5 508.1,439.1 513.8,444.1 512.8,452.1 510.0,457.8 506.9,457.1 503.8,460.2 498.8,457.8 496.2,460.9 492.5,455.2 491.9,454.8 491.2,441.6" fill="#ee92d4" stroke="#ee92d4" stroke-width="1"/>
<polygon points="513.8,444.1 518.1,441.5 521.9,439.0 548.1,437.1 548.8,446.5 553.8,456.5 551.2,457.8 548.1,456.5 545.0,460.2 541.2,458.4 536.9,461.5 532.5,459.0 529.4,464.0 524.7,469.5 521.2,466.5 516.2,462.1 511.2,461.5 510.0,457.8 512.8,452.1" fill="#ee92d4" stroke="#ee92d4" stroke-width="1"/>
<polygon points="321.9,358.8 343.8,358.5 344.4,354.8 355.2,354.4 355.6,355.6 356.5,379.4 355.6,380.6 333.1,380.6 332.5,385.0 321.9,385.6 320.0,372.5" fill="#a0cc63" stroke="#a0cc63" stroke-width="1"/>
<polygon points="355.6,355.6 396.3,354.6 397.5,378.8 390.0,380.0 389.4,378.1 356.5,379.4" fill="#a0cc63" stroke="#a0cc63" stroke-width="1"/>
<polygon points="333.1,380.6 355.6,380.6 358.8,385.0 356.9,390.0 359.4,392.5 360.0,398.1 355.0,400.0 354.4,403.1 340.0,405.0 336.9,398.8 336.9,390.0 328.1,390.6 327.5,386.9 332.5,385.0" fill="#a0cc63" stroke="#a0cc63" stroke-width="1"/>
<polygon points="321.9,385.6 327.5,386.9 328.1,390.6 336.9,390.0 336.9,398.8 340.0,405.0 340.4,420.6 330.0,420.6 325.0,417.5 321.0,416.9" fill="#a0cc63" stroke="#a0cc63" stroke-width="1"/>
<polygon points="356.5,379.4 389.4,378.1 390.0,380.0 397.5,378.8 398.1,396.2 386.9,396.9 386.5,415.6 375.0,415.0 371.9,413.1 371.2,410.0 373.8,407.5 370.0,405.0 367.5,398.8 365.0,396.9 362.5,399.4 360.0,398.1 359.4,392.5 356.9,390.0 358.8,385.0 355.6,380.6" fill="#a0cc63" stroke="#a0cc63" stroke-width="1"/>
<polygon points="340.0,405.0 354.4,403.1 355.0,400.0 360.0,398.1 362.5,399.4 365.0,396.9 367.5,398.8 370.0,405.0 373.8,407.5 371.2,410.0 371.9,413.1 367.5,416.2 365.0,420.0 366.2,433.1 360.0,426.9 356.9,425.6 354.4,429.4 350.0,426.9 345.0,427.5 342.5,430.6 336.9,426.9 331.9,423.1 330.0,420.6 340.4,420.6" fill="#a0cc63" stroke="#a0cc63" stroke-width="1"/>
<polygon points="367.5,416.2 371.9,413.1 375.0,415.0 386.5,415.6 386.9,420.0 396.0,420.5 396.2,426.6 398.1,432.2 398.8,442.2 396.9,443.1 391.9,446.2 388.1,443.8 386.2,444.4 377.5,440.0 373.8,440.6 366.9,440.0 366.2,433.1 365.0,420.0" fill="#a0cc63" stroke="#a0cc63" stroke-width="1"/>
<polygon points="396.5,350.5 414.4,350.0 414.4,361.2 425.6,361.5 426.2,395.0 398.1,396.2 397.5,378.8 396.3,354.6" fill="#a0cc63" stroke="#a0cc63" stroke-width="1"/>
<polygon points="386.9,396.9 398.1,396.2 426.2,395.0 427.5,408.1 424.4,408.8 424.4,419.8 421.9,420.4 420.0,419.8 416.9,421.0 415.0,423.5 396.2,426.6 396.0,420.5 386.9,420.0 386.5,415.6" fill="#a0cc63" stroke="#a0cc63" stroke-width="1"/>
<polygon points="396.2,426.6 415.0,423.5 416.9,421.0 420.0,419.8 421.9,420.4 424.4,419.8 425.6,434.1 425.6,442.2 423.8,444.1 418.8,444.1 412.5,442.9 408.1,447.2 405.0,449.1 402.5,444.1 398.8,442.2 398.1,432.2" fill="#a0cc63" stroke="#a0cc63" stroke-width="1"/>
<polygon points="425.6,361.5 432.5,361.5 440.0,362.9 448.3,363.4 448.8,366.0 450.0,394.4 450.6,407.5 427.5,408.1 426.2,395.0" fill="#a0cc63" stroke="#a0cc63" stroke-width="1"/>
<polygon points="448.3,363.4 451.2,365.6 455.0,371.2 460.0,376.9 465.0,382.5 470.0,386.2 476.2,388.8 477.5,388.8 481.2,389.4 487.5,390.0 489.4,387.5 490.6,388.1 491.2,389.4 491.2,395.0 450.0,394.4 448.8,366.0" fill="#a0cc63" stroke="#a0cc63" stroke-width="1"/>
<polygon points="450.0,394.4 491.2,395.0 491.2,408.5 478.1,409.8 476.2,412.9 477.5,414.8 476.2,417.2 469.4,419.1 456.9,417.9 455.6,407.5 450.6,407.5" fill="#a0cc63" stroke="#a0cc63" stroke-width="1"/>
<polygon points="476.2,417.2 477.5,414.8 476.2,412.9 478.1,409.8 491.2,408.5 491.9,411.2 497.5,411.6 498.1,417.5 495.0,419.8 494.4,428.5 486.9,429.1 486.2,427.2 470.0,426.6 469.4,419.1" fill="#a0cc63" stroke="#a0cc63" stroke-width="1"/>
<polygon points="424.4,408.8 427.5,408.1 450.6,407.5 455.6,407.5 456.9,417.9 457.5,434.1 425.6,434.1 424.4,419.8" fill="#a0cc63" stroke="#a0cc63" stroke-width="1"/>
<polygon points="425.6,434.1 457.5,434.1 459.4,447.9 458.8,454.8 457.5,457.2 455.6,458.5 453.8,453.5 448.8,454.1 445.0,457.2 440.0,464.1 433.8,459.8 435.6,455.4 432.5,453.5 426.9,451.0 428.8,445.4 425.6,442.2" fill="#a0cc63" stroke="#a0cc63" stroke-width="1"/>
<polygon points="456.9,417.9 469.4,419.1 470.0,426.6 486.2,427.2 486.9,429.1 494.4,428.5 492.5,440.5 491.2,441.6 491.5,447.2 459.4,447.9 457.5,434.1" fill="#a0cc63" stroke="#a0cc63" stroke-width="1"/>
<polygon points="459.4,447.9 491.5,447.2 491.9,454.8 488.8,460.4 484.4,462.2 483.8,464.8 483.1,469.8 480.0,471.0 478.1,467.2 480.0,464.1 478.1,459.8 476.2,458.5 471.9,461.6 468.1,465.4 464.4,463.5 461.9,458.5 457.5,457.2 458.8,454.8" fill="#a0cc63" stroke="#a0cc63" stroke-width="1"/>
</g>
<g fill="none" stroke="#0a0a0a" stroke-width="1.15" stroke-linejoin="round"><g id="mapline">
<polygon points="159.4,252.5 211.0,253.2 212.3,262.0 211.5,264.0 211.5,285.8 159.0,286.0"/>
<polygon points="211.0,253.2 269.5,253.3 269.5,287.5 211.5,285.5 211.5,264.0 212.3,262.0"/>
<polygon points="269.5,253.3 320.0,253.5 320.6,286.3 269.5,287.0"/>
<polygon points="320.0,253.5 349.2,253.5 352.0,258.0 355.0,262.5 358.3,267.5 358.3,281.3 321.2,280.8"/>
<polygon points="320.6,281.0 342.0,281.3 342.0,303.3 343.3,308.5 354.7,309.3 354.7,320.0 350.0,321.5 347.5,324.5 345.5,328.3 341.0,331.6 336.5,331.2 332.5,326.5 330.0,322.8 326.7,321.4 320.8,327.0"/>
<polygon points="349.2,253.5 398.5,253.0 399.3,292.5 393.3,292.5 385.0,286.7 377.5,285.0 377.5,280.8 372.5,275.8 367.5,270.0 358.3,267.5 355.0,262.5 352.0,258.0"/>
<polygon points="398.5,253.0 422.3,252.3 422.8,287.7 399.3,288.3"/>
<polygon points="342.0,281.3 358.3,281.3 358.3,267.5 367.5,270.0 372.5,275.8 377.5,280.8 377.5,285.0 378.0,308.7 343.3,308.5 342.0,303.3"/>
<polygon points="377.5,285.0 385.0,286.7 393.3,292.5 399.3,292.5 399.3,288.3 422.8,287.7 423.0,308.3 378.0,308.7"/>
<polygon points="354.7,309.5 395.3,308.7 395.3,333.0 354.7,333.3"/>
<polygon points="395.3,308.7 418.3,308.5 418.3,338.3 413.7,338.3 414.4,350.0 396.5,350.5"/>
<polygon points="354.7,333.3 395.3,333.0 396.3,354.6 355.6,355.6"/>
<polygon points="320.8,327.0 326.7,321.4 330.0,322.8 332.5,326.5 336.5,331.2 341.0,331.6 345.5,328.3 347.5,324.5 350.0,321.5 354.7,320.0 354.7,333.3 355.2,354.4 344.4,354.8 343.8,358.5 321.9,358.8 320.6,352.5 319.6,340.0"/>
<polygon points="422.3,252.3 456.5,251.3 456.3,278.7 422.8,279.7"/>
<polygon points="456.5,251.3 495.8,250.0 495.5,263.3 488.3,266.7 487.5,269.2 481.7,270.0 479.2,272.5 478.3,275.8 480.0,277.5 456.3,278.7"/>
<polygon points="495.8,250.0 535.8,247.7 535.8,302.7 524.2,303.5 524.2,300.0 518.3,298.3 512.5,293.3 507.5,294.2 508.3,290.0 503.3,289.2 498.3,282.5 495.8,280.0 487.5,285.8 482.5,284.7 483.3,282.5 488.3,279.2 485.8,277.5 480.0,277.5 478.3,275.8 479.2,272.5 481.7,270.0 487.5,269.2 488.3,266.7 495.5,263.3"/>
<polygon points="422.8,279.7 456.3,278.7 457.5,279.0 458.7,307.5 423.0,308.3"/>
<polygon points="456.3,278.7 480.0,277.5 485.8,277.5 488.3,279.2 483.3,282.5 482.5,284.7 481.7,295.0 487.5,297.0 487.5,302.2 474.7,303.0 474.2,306.7 458.7,307.5 457.5,279.0"/>
<polygon points="482.5,284.7 487.5,285.8 495.8,280.0 498.3,282.5 503.3,289.2 508.3,290.0 507.5,294.2 512.5,293.3 518.3,298.3 524.2,300.0 524.2,303.5 523.3,304.2 504.2,307.0 493.3,305.8 492.5,302.0 487.5,302.2 487.5,297.0 481.7,295.0"/>
<polygon points="463.3,308.2 474.2,306.7 474.7,303.0 492.5,302.0 493.3,305.8 504.2,307.0 504.7,321.7 475.8,322.5 472.5,321.7 466.7,318.3 463.7,317.5"/>
<polygon points="504.2,307.0 523.3,304.2 523.3,310.2 536.7,310.2 536.7,324.3 529.2,325.2 529.5,341.3 506.3,341.5 504.7,321.7"/>
<polygon points="418.3,308.5 423.0,308.3 447.5,308.5 447.9,337.5 418.3,338.3"/>
<polygon points="447.5,308.5 458.7,307.5 463.3,308.2 463.7,317.5 466.7,318.3 472.5,321.7 475.8,322.5 476.7,337.5 447.9,337.5"/>
<polygon points="475.8,322.5 504.7,321.7 506.3,341.5 505.6,353.8 476.9,354.0 476.7,337.5"/>
<polygon points="413.7,338.3 418.3,338.3 447.9,337.5 448.3,363.4 440.0,362.9 432.5,361.5 425.6,361.5 414.4,361.2 414.4,350.0"/>
<polygon points="447.9,337.5 476.7,337.5 476.9,360.6 448.3,361.0"/>
<polygon points="448.3,361.0 476.9,360.6 477.5,388.8 476.2,388.8 470.0,386.2 465.0,382.5 460.0,376.9 455.0,371.2 451.2,365.6 448.3,363.4"/>
<polygon points="476.9,354.0 505.6,353.8 506.0,357.3 499.4,357.5 499.4,387.5 495.0,388.1 491.2,389.4 490.6,388.1 489.4,387.5 487.5,390.0 481.2,389.4 477.5,388.8 476.9,360.6"/>
<polygon points="535.8,247.7 545.8,246.7 545.8,273.5 546.5,284.5 535.8,285.2"/>
<polygon points="545.8,246.7 565.8,245.2 565.8,272.0 545.8,273.5"/>
<polygon points="565.8,245.2 588.5,244.0 588.7,266.5 588.7,276.0 571.3,276.5 571.3,271.8 565.8,272.0"/>
<polygon points="588.5,244.0 608.0,242.7 611.3,266.0 588.7,266.5"/>
<polygon points="588.7,266.5 611.3,266.0 615.0,299.3 603.3,299.3 589.7,299.3 588.7,276.0"/>
<polygon points="567.5,277.7 571.3,276.5 588.7,276.0 589.7,299.3 584.2,300.2 583.3,305.2 568.3,306.0"/>
<polygon points="545.8,273.5 565.8,272.0 571.3,271.8 571.3,276.5 567.5,277.7 568.3,306.0 561.7,306.0 557.5,301.8 550.8,301.8 547.5,294.3 546.7,289.3 549.2,286.0 546.5,284.5"/>
<polygon points="535.8,285.2 546.5,284.5 549.2,286.0 546.7,289.3 547.5,294.3 550.8,301.8 550.0,309.3 550.8,319.3 547.5,322.7 536.7,324.3 536.7,310.2 523.3,310.2 523.3,304.2 524.2,303.5 535.8,302.7"/>
<polygon points="550.8,301.8 557.5,301.8 561.7,306.0 568.3,306.0 583.3,305.2 575.8,309.3 579.2,311.8 577.5,315.2 580.8,317.7 579.2,321.0 576.7,321.8 573.3,324.3 568.3,323.5 560.8,326.8 558.3,323.5 547.5,322.7 550.8,319.3 550.0,309.3"/>
<polygon points="583.3,305.2 584.2,300.2 589.7,299.3 603.3,299.3 604.4,334.4 586.9,335.4 585.0,335.2 584.2,323.5 579.2,321.0 580.8,317.7 577.5,315.2 579.2,311.8 575.8,309.3"/>
<polygon points="603.3,299.3 615.0,299.3 618.8,316.0 620.0,329.3 621.2,333.5 604.4,334.4"/>
<polygon points="586.9,335.4 604.4,334.4 621.2,333.5 621.9,334.8 625.6,352.9 622.5,356.0 620.0,354.8 617.5,356.0 615.0,359.1 612.5,354.8 609.4,353.5 606.2,354.8 603.1,353.5 597.5,350.4 590.0,347.2 588.1,341.0"/>
<polygon points="547.5,322.7 558.3,323.5 560.8,326.8 568.3,323.5 573.3,324.3 576.7,321.8 579.2,321.0 584.2,323.5 585.0,335.2 586.9,335.4 588.1,341.0 590.0,347.2 585.6,352.2 584.4,358.5 580.6,359.8 574.8,358.0 574.1,342.2 554.8,342.5 554.1,333.5 551.0,328.5 551.0,324.5"/>
<polygon points="529.2,325.2 536.7,324.3 547.5,322.7 551.0,324.5 551.0,328.5 554.1,333.5 554.8,342.5 550.4,342.9 549.8,347.2 547.9,348.5 546.0,355.4 539.1,354.8 537.2,346.6 530.4,346.0 529.8,345.4 529.5,341.3"/>
<polygon points="506.3,341.5 529.5,341.3 529.8,345.4 530.4,346.0 537.2,346.6 539.1,354.8 541.0,362.5 516.0,362.2 514.8,352.2 512.2,353.5 511.0,356.6 506.0,357.3 505.6,353.8"/>
<polygon points="499.4,357.5 506.0,357.3 511.0,356.6 512.2,353.5 514.8,352.2 516.0,362.2 515.8,389.0 513.5,391.4 505.0,391.9 501.2,390.6 499.4,387.5"/>
<polygon points="550.4,342.9 554.8,342.5 574.1,342.2 574.8,358.0 570.6,360.4 564.1,362.9 559.8,364.8 549.8,368.5 543.5,371.0 541.0,362.5 539.1,354.8 546.0,355.4 547.9,348.5 549.8,347.2"/>
<polygon points="590.0,347.2 597.5,350.4 603.1,353.5 604.4,361.6 600.0,364.1 599.8,374.1 576.9,374.5 576.2,369.1 571.2,368.5 570.6,360.4 574.8,358.0 580.6,359.8 584.4,358.5 585.6,352.2"/>
<polygon points="516.0,362.2 541.0,362.5 543.5,371.0 539.1,374.8 538.5,386.0 537.5,398.0 520.3,400.0 520.0,390.0 515.8,389.0"/>
<polygon points="491.2,389.4 495.0,388.1 499.4,387.5 501.2,390.6 505.0,391.9 513.5,391.4 515.8,389.0 520.0,390.0 520.3,400.0 515.4,405.0 515.0,416.5 498.1,417.5 497.5,411.6 491.9,411.2 491.2,408.5"/>
<polygon points="515.4,405.0 520.3,400.0 537.5,398.0 539.0,402.8 538.5,415.2 535.2,416.2 535.0,420.2 521.2,422.1 515.0,420.6 515.0,416.5"/>
<polygon points="543.5,371.0 549.8,368.5 559.8,364.8 564.1,362.9 570.6,360.4 571.2,368.5 576.2,369.1 576.9,374.5 568.1,377.2 568.8,399.6 568.0,405.0 559.5,408.0 548.8,407.1 547.5,402.8 539.0,402.8 537.5,398.0 538.5,386.0 539.1,374.8"/>
<polygon points="568.1,377.2 576.9,374.5 599.8,374.1 599.4,379.8 596.9,382.2 596.2,388.5 593.8,389.1 594.5,399.0 568.8,399.6"/>
<polygon points="599.8,374.1 600.0,364.1 604.4,361.6 603.1,353.5 606.2,354.8 609.4,353.5 612.5,354.8 615.0,359.1 617.5,356.0 620.0,354.8 622.5,356.0 625.6,352.9 626.9,368.5 627.0,384.0 626.2,409.4 600.6,409.5 600.0,399.0 594.5,399.0 593.8,389.1 596.2,388.5 596.9,382.2 599.4,379.8"/>
<polygon points="568.8,399.6 594.5,399.0 600.0,399.0 600.6,409.5 595.6,410.2 595.6,427.8 591.2,428.4 589.4,434.0 556.2,435.9 555.0,413.4 559.5,408.0 568.0,405.0"/>
<polygon points="595.6,410.2 600.6,409.5 626.2,409.4 628.1,434.0 628.9,468.6 622.5,466.5 617.5,465.2 612.5,462.8 607.5,461.5 602.5,456.5 597.5,455.2 592.5,450.2 589.4,448.4 589.4,434.0 591.2,428.4 595.6,427.8"/>
<polygon points="548.1,437.1 556.2,435.9 589.4,434.0 589.4,448.4 585.0,449.6 581.2,454.0 575.6,455.9 571.2,455.2 566.9,451.5 562.5,455.9 557.5,455.2 553.8,456.5 548.8,446.5"/>
<polygon points="539.0,402.8 547.5,402.8 548.8,407.1 559.5,408.0 555.0,413.4 556.2,435.9 548.1,437.1 521.9,439.0 521.2,422.1 535.0,420.2 535.2,416.2 538.5,415.2"/>
<polygon points="498.1,417.5 515.0,416.5 515.0,420.6 521.2,422.1 521.9,439.0 518.1,441.5 513.8,444.1 508.1,439.1 492.5,440.5 494.4,428.5 495.0,419.8"/>
<polygon points="492.5,440.5 508.1,439.1 513.8,444.1 512.8,452.1 510.0,457.8 506.9,457.1 503.8,460.2 498.8,457.8 496.2,460.9 492.5,455.2 491.9,454.8 491.2,441.6"/>
<polygon points="513.8,444.1 518.1,441.5 521.9,439.0 548.1,437.1 548.8,446.5 553.8,456.5 551.2,457.8 548.1,456.5 545.0,460.2 541.2,458.4 536.9,461.5 532.5,459.0 529.4,464.0 524.7,469.5 521.2,466.5 516.2,462.1 511.2,461.5 510.0,457.8 512.8,452.1"/>
<polygon points="321.9,358.8 343.8,358.5 344.4,354.8 355.2,354.4 355.6,355.6 356.5,379.4 355.6,380.6 333.1,380.6 332.5,385.0 321.9,385.6 320.0,372.5"/>
<polygon points="355.6,355.6 396.3,354.6 397.5,378.8 390.0,380.0 389.4,378.1 356.5,379.4"/>
<polygon points="333.1,380.6 355.6,380.6 358.8,385.0 356.9,390.0 359.4,392.5 360.0,398.1 355.0,400.0 354.4,403.1 340.0,405.0 336.9,398.8 336.9,390.0 328.1,390.6 327.5,386.9 332.5,385.0"/>
<polygon points="321.9,385.6 327.5,386.9 328.1,390.6 336.9,390.0 336.9,398.8 340.0,405.0 340.4,420.6 330.0,420.6 325.0,417.5 321.0,416.9"/>
<polygon points="356.5,379.4 389.4,378.1 390.0,380.0 397.5,378.8 398.1,396.2 386.9,396.9 386.5,415.6 375.0,415.0 371.9,413.1 371.2,410.0 373.8,407.5 370.0,405.0 367.5,398.8 365.0,396.9 362.5,399.4 360.0,398.1 359.4,392.5 356.9,390.0 358.8,385.0 355.6,380.6"/>
<polygon points="340.0,405.0 354.4,403.1 355.0,400.0 360.0,398.1 362.5,399.4 365.0,396.9 367.5,398.8 370.0,405.0 373.8,407.5 371.2,410.0 371.9,413.1 367.5,416.2 365.0,420.0 366.2,433.1 360.0,426.9 356.9,425.6 354.4,429.4 350.0,426.9 345.0,427.5 342.5,430.6 336.9,426.9 331.9,423.1 330.0,420.6 340.4,420.6"/>
<polygon points="367.5,416.2 371.9,413.1 375.0,415.0 386.5,415.6 386.9,420.0 396.0,420.5 396.2,426.6 398.1,432.2 398.8,442.2 396.9,443.1 391.9,446.2 388.1,443.8 386.2,444.4 377.5,440.0 373.8,440.6 366.9,440.0 366.2,433.1 365.0,420.0"/>
<polygon points="396.5,350.5 414.4,350.0 414.4,361.2 425.6,361.5 426.2,395.0 398.1,396.2 397.5,378.8 396.3,354.6"/>
<polygon points="386.9,396.9 398.1,396.2 426.2,395.0 427.5,408.1 424.4,408.8 424.4,419.8 421.9,420.4 420.0,419.8 416.9,421.0 415.0,423.5 396.2,426.6 396.0,420.5 386.9,420.0 386.5,415.6"/>
<polygon points="396.2,426.6 415.0,423.5 416.9,421.0 420.0,419.8 421.9,420.4 424.4,419.8 425.6,434.1 425.6,442.2 423.8,444.1 418.8,444.1 412.5,442.9 408.1,447.2 405.0,449.1 402.5,444.1 398.8,442.2 398.1,432.2"/>
<polygon points="425.6,361.5 432.5,361.5 440.0,362.9 448.3,363.4 448.8,366.0 450.0,394.4 450.6,407.5 427.5,408.1 426.2,395.0"/>
<polygon points="448.3,363.4 451.2,365.6 455.0,371.2 460.0,376.9 465.0,382.5 470.0,386.2 476.2,388.8 477.5,388.8 481.2,389.4 487.5,390.0 489.4,387.5 490.6,388.1 491.2,389.4 491.2,395.0 450.0,394.4 448.8,366.0"/>
<polygon points="450.0,394.4 491.2,395.0 491.2,408.5 478.1,409.8 476.2,412.9 477.5,414.8 476.2,417.2 469.4,419.1 456.9,417.9 455.6,407.5 450.6,407.5"/>
<polygon points="476.2,417.2 477.5,414.8 476.2,412.9 478.1,409.8 491.2,408.5 491.9,411.2 497.5,411.6 498.1,417.5 495.0,419.8 494.4,428.5 486.9,429.1 486.2,427.2 470.0,426.6 469.4,419.1"/>
<polygon points="424.4,408.8 427.5,408.1 450.6,407.5 455.6,407.5 456.9,417.9 457.5,434.1 425.6,434.1 424.4,419.8"/>
<polygon points="425.6,434.1 457.5,434.1 459.4,447.9 458.8,454.8 457.5,457.2 455.6,458.5 453.8,453.5 448.8,454.1 445.0,457.2 440.0,464.1 433.8,459.8 435.6,455.4 432.5,453.5 426.9,451.0 428.8,445.4 425.6,442.2"/>
<polygon points="456.9,417.9 469.4,419.1 470.0,426.6 486.2,427.2 486.9,429.1 494.4,428.5 492.5,440.5 491.2,441.6 491.5,447.2 459.4,447.9 457.5,434.1"/>
<polygon points="459.4,447.9 491.5,447.2 491.9,454.8 488.8,460.4 484.4,462.2 483.8,464.8 483.1,469.8 480.0,471.0 478.1,467.2 480.0,464.1 478.1,459.8 476.2,458.5 471.9,461.6 468.1,465.4 464.4,463.5 461.9,458.5 457.5,457.2 458.8,454.8"/>
</g></g>
  </svg>
  <svg id="labsvg" class="abs" style="left:0;top:-2px;will-change:transform" width="720" height="676" viewBox="0 0 720 676">
<g id="maplabels" font-family="Liberation Sans, sans-serif" font-size="7.5" fill="#0c0c0c" stroke="#0c0c0c" stroke-width="0.22" text-anchor="middle">
<text x="189.6" y="276.5">Cimarron</text>
<text x="241.9" y="276.5">Texas</text>
<text x="296.6" y="275.6">Beaver</text>
<text x="341.3" y="275.2">Harper</text>
<text x="331.7" y="310.7">Ellis</text>
<text x="383.3" y="272.4">Woods</text>
<text x="410.8" y="271.0">Alfalfa</text>
<text x="360.5" y="298.5">Woodward</text>
<text x="398.3" y="306.0">Major</text>
<text x="377.2" y="325.5">Dewey</text>
<text x="407.2" y="334.0">Blaine</text>
<text x="375.5" y="348.5">Custer</text>
<text x="339.7" y="348.2">Roger Mills</text>
<text x="440.3" y="269.0">Grant</text>
<text x="472.2" y="266.0">Kay</text>
<text x="512.0" y="273.5">Osage</text>
<text x="442.5" y="296.0">Garfield</text>
<text x="469.2" y="295.2">Noble</text>
<text x="494.2" y="297.4">Pawnee</text>
<text x="486.7" y="318.5">Payne</text>
<text x="519.7" y="324.4">Creek</text>
<text x="436.7" y="326.9">Kingfisher</text>
<text x="462.5" y="333.5">Logan</text>
<text x="492.0" y="342.2">Lincoln</text>
<text x="432.5" y="353.7">Canadian</text>
<text x="464.5" y="353.0">Oklahoma</text>
<text x="472.0" y="372.0">Cleveland</text>
<text x="500.6" y="380.8">Pottawatomie</text>
<text x="553.8" y="272.4">Washington</text>
<text x="555.5" y="259.9">Nowata</text>
<text x="576.7" y="262.0">Craig</text>
<text x="600.3" y="260.0">Ottawa</text>
<text x="605.3" y="288.7">Delaware</text>
<text x="579.2" y="295.9">Mayes</text>
<text x="557.5" y="297.9">Rogers</text>
<text x="541.7" y="312.0">Tulsa</text>
<text x="566.7" y="320.7">Wagoner</text>
<text x="594.5" y="316.2">Cherokee</text>
<text x="611.3" y="330.0">Adair</text>
<text x="606.9" y="348.1">Sequoyah</text>
<text x="570.0" y="338.4">Muskogee</text>
<text x="545.8" y="342.9">Okmulgee</text>
<text x="522.2" y="353.1">Okfuskee</text>
<text x="515.0" y="373.7">Seminole</text>
<text x="564.8" y="358.7">MacIntosh</text>
<text x="589.0" y="371.8">Haskell</text>
<text x="527.3" y="388.1">Hughes</text>
<text x="506.5" y="404.6">Pontotoc</text>
<text x="526.9" y="416.1">Coal</text>
<text x="553.8" y="392.4">Pittsburg</text>
<text x="582.5" y="391.7">Latimer</text>
<text x="613.1" y="394.8">Le Flore</text>
<text x="577.5" y="423.9">Pushmataha</text>
<text x="610.6" y="444.8">McCurtain</text>
<text x="571.0" y="447.9">Choctaw</text>
<text x="539.0" y="433.6">Atoka</text>
<text x="508.5" y="437.3">Johnston</text>
<text x="506.6" y="450.4">Marshall</text>
<text x="528.8" y="455.8">Bryan</text>
<text x="340.0" y="374.9">Beckham</text>
<text x="378.8" y="372.1">Washita</text>
<text x="346.2" y="394.2">Greer</text>
<text x="334.4" y="413.9">Harmon</text>
<text x="379.4" y="394.2">Kiowa</text>
<text x="354.4" y="421.4">Jackson</text>
<text x="384.4" y="434.3">Tillman</text>
<text x="411.9" y="379.8">Caddo</text>
<text x="408.8" y="412.7">Comanche</text>
<text x="412.5" y="438.7">Cotton</text>
<text x="438.5" y="388.3">Grady</text>
<text x="464.4" y="394.6">McClain</text>
<text x="473.0" y="408.5">Garvin</text>
<text x="483.9" y="427.7">Murray</text>
<text x="441.4" y="425.5">Stephens</text>
<text x="444.4" y="449.7">Jefferson</text>
<text x="473.9" y="442.7">Carter</text>
<text x="475.3" y="458.0">Love</text>
</g>
  </svg>
  <div id="left" class="abs">
    <div class="tn" style="top:10.5px">1</div>
    <div class="tn" style="top:46px">2</div>
    <div class="tn" style="top:82px">3</div>
    <div class="abs" style="left:24px;top:9.2px;width:33px;height:27.2px;border:2px solid #c8472c;background:#fff"></div>
    <div class="abs" style="left:25.2px;top:47px;width:29.6px;height:23.6px;border:1px solid #cdcdcd;background:#fff"></div>
    <div class="abs" style="left:25.2px;top:82.800px;width:29.600px;height:23.600px;border:1px solid #cdcdcd;background:#fff"></div>
    <svg class="abs" style="left:0;top:0" width="74" height="120" viewBox="0 104 74 120">
      <g transform="translate(28.5 120.3) scale(0.049 0.0515) translate(-158 -243)"><use href="#mapfill"/><g fill="none" stroke="#050505" stroke-width="10.5" stroke-linejoin="round"><use href="#mapline"/></g></g>
      <g transform="translate(33.8 159.6) scale(0.029 0.029) translate(-158 -243)"><use href="#mapfill"/><g fill="none" stroke="#050505" stroke-width="30" stroke-linejoin="round"><use href="#mapline"/></g></g>
      <g transform="translate(33.8 194.6) scale(0.030 0.031) translate(-158 -243)"><g fill="#333" stroke="#333" stroke-width="62" stroke-linejoin="round"><use href="#mapline"/></g><g fill="#fff" stroke="#fff" stroke-width="22" stroke-linejoin="round"><use href="#mapline"/></g></g>
    </svg>
  </div>
  <div id="notes" class="abs"><div class="abs" style="left:6px;top:6.5px;font-size:11px;line-height:13px;color:#111;white-space:nowrap">Click to add notes</div></div>
  <div id="status" class="abs">
    <div class="st" style="left:19px">Slide 1 of 3</div>
    <div class="st" style="left:89.500px">English (United States)</div>
    <div class="st" style="left:298.500px">Notes</div>
    <div class="st" style="left:358px">Comments</div>
    <div class="st" style="left:645px">91%</div>
    <div class="abs" style="left:424px;top:0;width:24px;height:19px;background:#bdbdbd"></div>
    <svg class="abs" style="left:0;top:0" width="720" height="19" viewBox="0 657 720 19" fill="none">
      <!-- notes icon -->
      <g stroke="#555" stroke-width="1.100"><line x1="285" y1="665.500" x2="295" y2="665.500"/><line x1="285" y1="668.500" x2="295" y2="668.500"/><line x1="285" y1="671.500" x2="295" y2="671.500"/></g><path d="M287.500 663.400l2.500-2.400 2.500 2.400z" fill="#555"/>
      <!-- comments icon -->
      <path d="M344.500 662.500h9.500v7h-5.500l-2.500 2.500v-2.500h-1.500z" fill="#4a4a4a"/>
      <!-- normal view -->
      <rect x="430.500" y="661.500" width="11" height="10.500" rx="1" stroke="#fff" stroke-width="1.200"/><rect x="432.800" y="664" width="6.400" height="2.600" fill="#fff"/><line x1="432.800" y1="669.200" x2="439.200" y2="669.200" stroke="#fff" stroke-width="1.200"/>
      <!-- grid -->
      <g fill="#4a4a4a"><rect x="459" y="662" width="4.600" height="3.800" rx="0.800"/><rect x="465.400" y="662" width="4.600" height="3.800" rx="0.800"/><rect x="459" y="667.800" width="4.600" height="3.800" rx="0.800"/><rect x="465.400" y="667.800" width="4.600" height="3.800" rx="0.800"/></g>
      <!-- slideshow -->
      <rect x="489.500" y="662.500" width="11" height="6.500" stroke="#4a4a4a" stroke-width="1.100"/><line x1="492.500" y1="665.800" x2="497.500" y2="665.800" stroke="#4a4a4a"/><path d="M495 669v2.500M492.500 672h5" stroke="#4a4a4a" stroke-width="1.100"/>
      <!-- zoom -->
      <line x1="516.500" y1="667" x2="522" y2="667" stroke="#4a4a4a" stroke-width="1.400"/>
      <rect x="531" y="665.600" width="83" height="2.800" rx="1.400" fill="#a9a9a9"/>
      <circle cx="568.500" cy="667" r="4.600" fill="#fdfdfd" stroke="#b4b4b4" stroke-width="0.800"/>
      <path d="M621.500 667h6M624.500 664v6" stroke="#4a4a4a" stroke-width="1.400"/>
      <!-- fit -->
      <rect x="685.500" y="662" width="10.500" height="10.500" rx="1" stroke="#4a4a4a" stroke-width="1"/><path d="M688 666v-1.800h1.800M693.500 666v-1.800h-1.800M688 668.500v1.800h1.800M693.500 668.500v1.800h-1.800" stroke="#4a4a4a" stroke-width="1"/><rect x="690" y="666.500" width="1.500" height="1.500" fill="#4a4a4a"/>
    </svg>
  </div>
</div>
</div>
</body></html>
